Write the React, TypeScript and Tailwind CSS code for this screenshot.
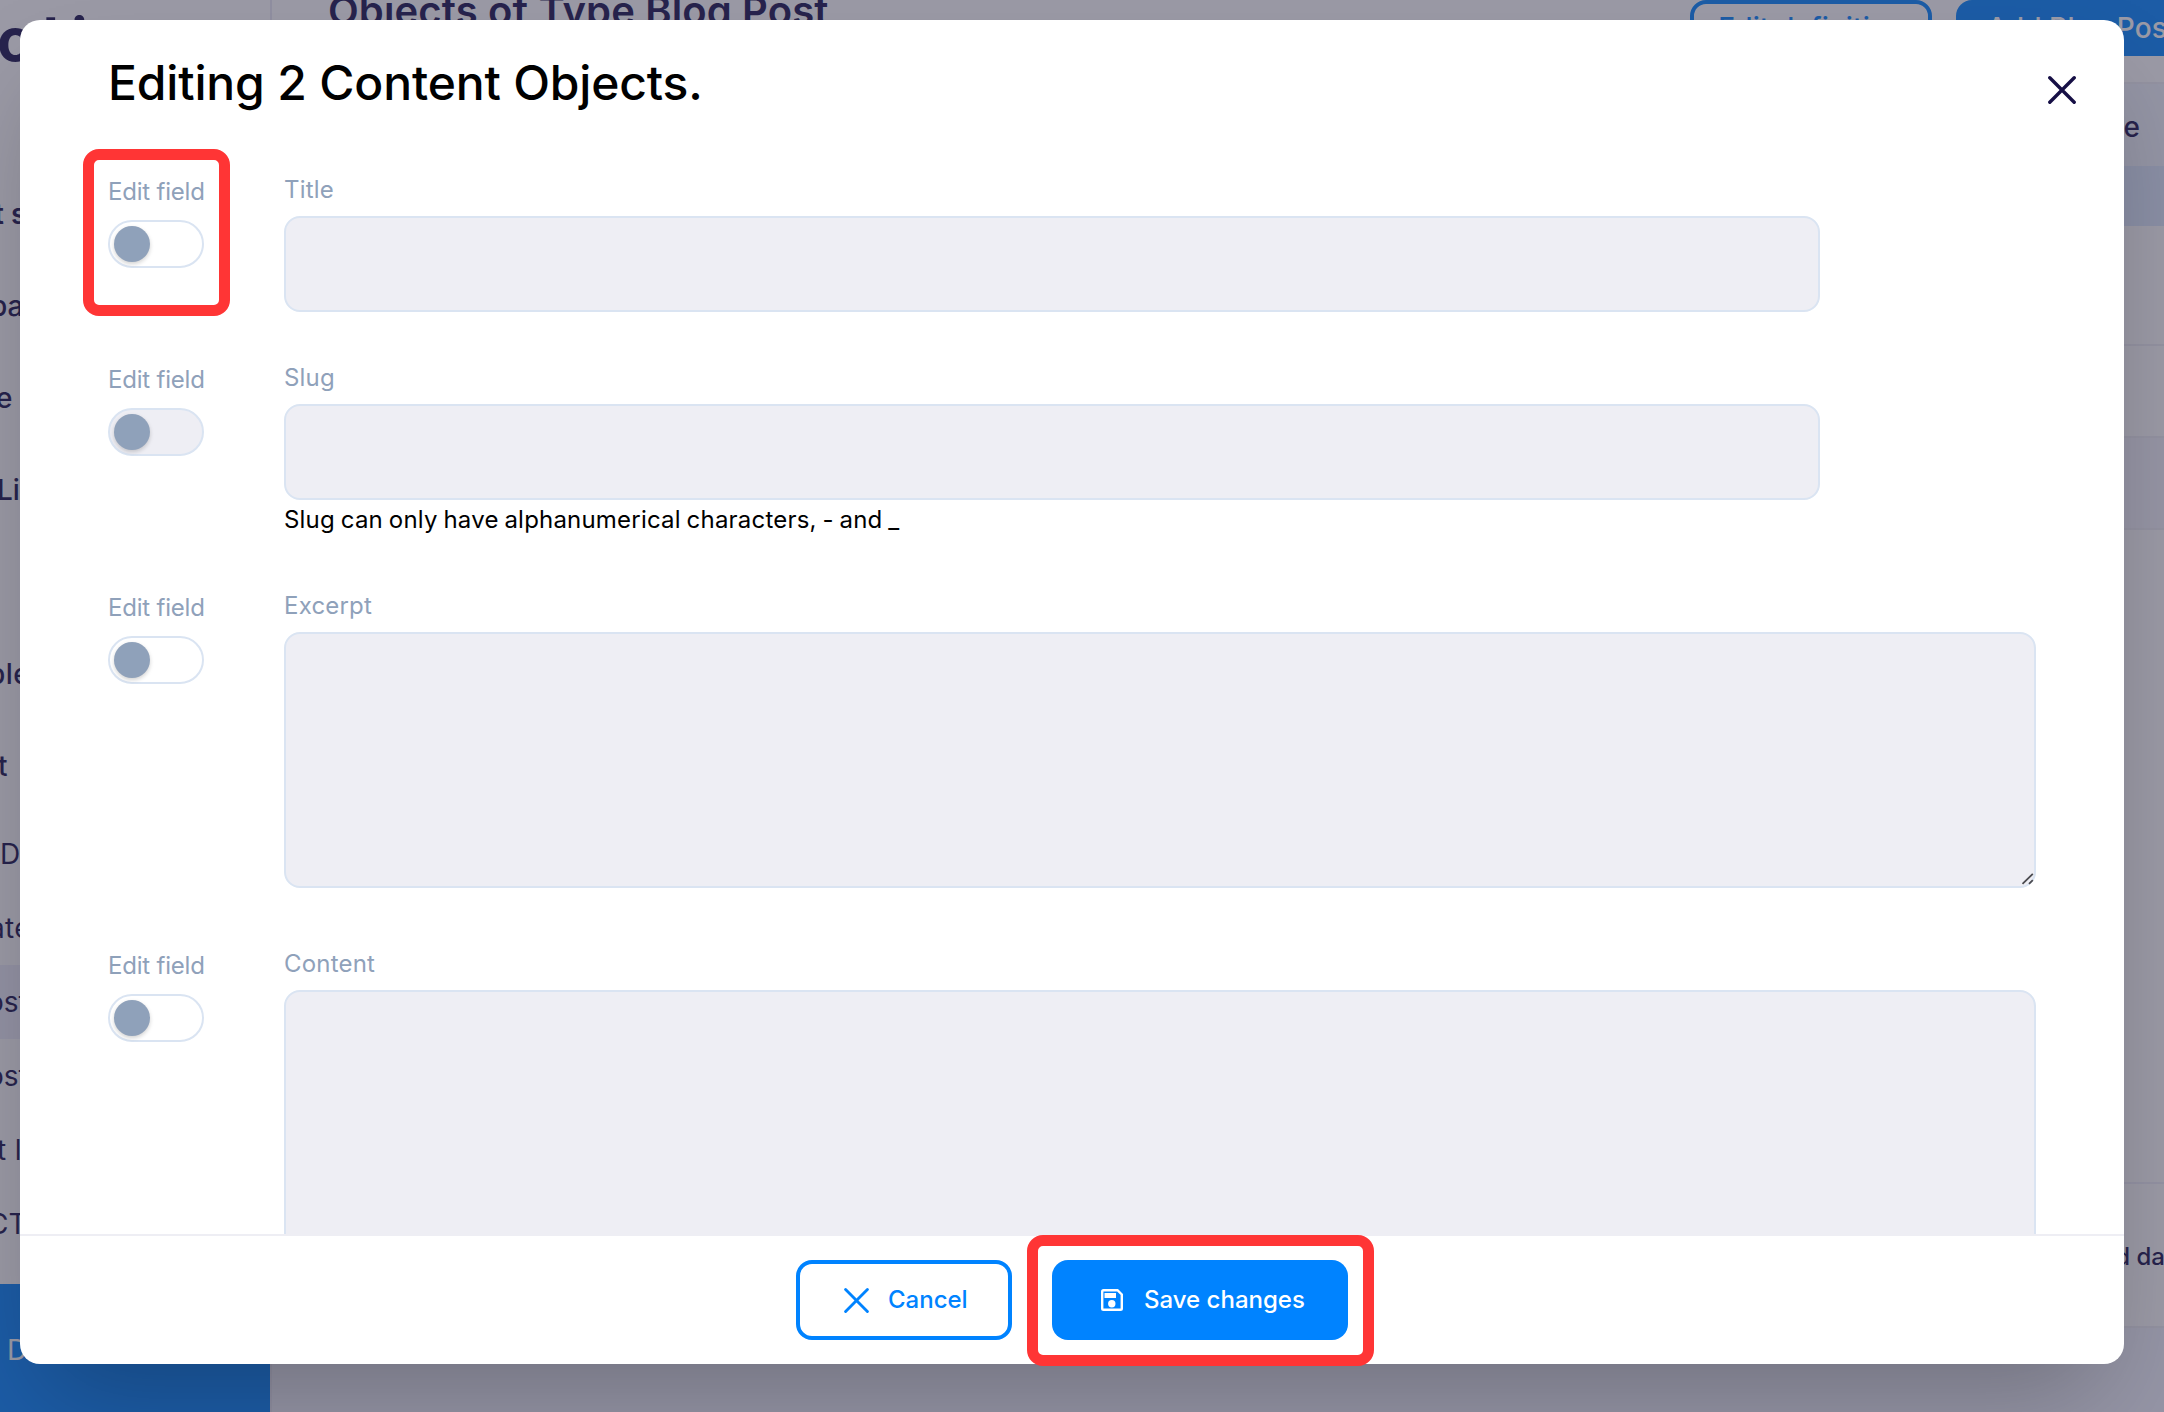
import React from "react";

const navGroups = [
  { label: "t s", cls: "font-semibold -ml-[6px]" },
  { label: "pa", cls: "font-medium -ml-[10px]" },
  { label: "e", cls: "font-medium -ml-[4px]" },
  { label: "Li", cls: "font-medium -ml-[3px]" },
  { label: "", cls: "" },
  { label: "ple", cls: "font-medium -ml-[12px] tracking-[0.5px]" },
  { label: "t", cls: "font-medium -ml-[2px]" },
];

const navTypes = [
  { label: "D", cls: "", active: false },
  { label: "ate", cls: "-ml-[11px] tracking-[0.3px]", active: false },
  { label: "ost", cls: "-ml-[13px]", active: true },
  { label: "ost", cls: "-ml-[13px]", active: false },
  { label: "t l", cls: "-ml-[3px] tracking-[0.4px]", active: false },
  { label: "CT", cls: "-ml-[12px]", active: false },
];

function Sidebar() {
  return (
    <aside className="flex h-full w-[272px] shrink-0 flex-col overflow-hidden border-r-2 border-[#e8e8f4] bg-white">
      <div className="flex h-[168px] items-start pt-[3px] text-[60px] leading-[72px] font-bold whitespace-nowrap">
        <span className="-ml-[3px]">c</span>
        <span className="-mt-[3px] ml-[9px]">t</span>
        <span className="ml-[8px]">i</span>
      </div>
      {navGroups.map((item, i) => (
        <div key={i} className="flex h-[92px] shrink-0 items-center whitespace-nowrap">
          <span className={item.cls}>{item.label}</span>
        </div>
      ))}
      <div className="mt-[5px] flex flex-col">
        {navTypes.map((item, i) => (
          <div
            key={i}
            className={`flex h-[74px] items-center whitespace-nowrap ${item.active ? "bg-[#eeeefa]" : ""}`}
          >
            <span className={item.cls}>{item.label}</span>
          </div>
        ))}
      </div>
      <div className="-mr-[2px] mt-auto flex h-[128px] items-center bg-[#0083ff] pt-1 text-white">
        <span className="ml-[7px]">D</span>
      </div>
    </aside>
  );
}

function Backdrop() {
  return (
    <div className="flex h-full w-full text-[28px] text-[#17114d]">
      <Sidebar />
      <main className="flex min-w-0 flex-1 flex-col bg-white">
        <header className="flex h-[84px] shrink-0 items-start border-b-2 border-[#eeeef5]">
          <h1 className="-mt-[17px] ml-[56px] flex-1 text-[40px] leading-[56px] font-semibold tracking-[0.13px] whitespace-nowrap">
            Objects of Type Blog Post
          </h1>
          <div className="-mr-[60px] flex gap-6 font-medium whitespace-nowrap">
            <div className="flex h-14 w-[242px] items-center justify-center rounded-2xl border-4 border-[#0083ff] tracking-[0.1px] text-[#0083ff]">
              Edit definition
            </div>
            <div className="flex h-14 w-[268px] items-center rounded-2xl bg-[#0083ff] pl-[31px] tracking-[0.1px] text-white">
              Add Blog Post
            </div>
          </div>
        </header>
        <div className="flex h-[82px] shrink-0 items-center justify-end bg-[#f1f5fd] pt-[3px] pr-6 font-medium">
          e
        </div>
        <div className="h-[60px] shrink-0 bg-[#dde9fd]" />
        <div className="h-[120px] shrink-0 border-b-2 border-[#eeeef5]" />
        <div className="h-[92px] shrink-0 border-b-2 border-[#eeeef5]" />
        <div className="h-[92px] shrink-0 border-b-2 border-[#eeeef5] bg-[#f5f5fc]" />
        <div className="h-[654px] shrink-0 border-b-2 border-[#eeeef9]" />
        <div className="flex h-[144px] shrink-0 items-center justify-end border-b-2 border-[#eeeef5] pt-[3px] text-2xl font-medium whitespace-nowrap">
          <span className="-mr-px">d da</span>
        </div>
        <div className="flex-1 bg-[#f3f5ff]" />
      </main>
    </div>
  );
}

function Toggle({ disabled = false }: { disabled?: boolean }) {
  return (
    <div
      className={`flex h-12 w-24 items-center rounded-full border-2 border-[#dae4f2] pl-1 ${disabled ? "bg-[#eeeef4]" : "bg-white"}`}
    >
      <div className="size-9 rounded-full bg-[#8fa1ba] shadow-[0_2px_4px_rgba(0,0,0,0.18)]" />
    </div>
  );
}

function ResizeHandle() {
  return (
    <svg
      viewBox="0 0 14 14"
      className="absolute -right-px bottom-0 size-[14px]"
      stroke="#4b4b50"
      strokeWidth="1.8"
      fill="none"
    >
      <path d="M1.5 11.8L11.8 1.8M8 11.8L11.8 8.2" />
    </svg>
  );
}

type FieldProps = {
  label: string;
  rowCls: string;
  boxCls: string;
  disabled?: boolean;
  help?: string;
  resizable?: boolean;
};

function Field({ label, rowCls, boxCls, disabled, help, resizable }: FieldProps) {
  return (
    <div className={`flex shrink-0 ${rowCls}`}>
      <div className="w-44 shrink-0">
        <div className="mt-[2px] mb-[11px] text-2xl leading-[35px] tracking-[-0.2px] whitespace-nowrap text-[#8fa1ba]">
          Edit field
        </div>
        <Toggle disabled={disabled} />
      </div>
      <div className="flex-1">
        <div className="mb-[9px] text-2xl leading-[35px] tracking-[0.2px] text-[#8fa1ba]">{label}</div>
        <div className={`relative rounded-2xl border-2 border-[#dae4f2] bg-[#eeeef4] ${boxCls}`}>
          {resizable && <ResizeHandle />}
        </div>
        {help && (
          <p className="mt-0.5 text-2xl leading-9 tracking-[0.2px] text-black [word-spacing:-1.1px]">{help}</p>
        )}
      </div>
    </div>
  );
}

function CrossIcon({ className, width }: { className: string; width: number }) {
  return (
    <svg
      viewBox="0 0 28 28"
      className={className}
      fill="none"
      stroke="currentColor"
      strokeWidth={width}
      strokeLinecap="round"
    >
      <path d="M1.8 1.8L26.2 26.2M26.2 1.8L1.8 26.2" />
    </svg>
  );
}

function SaveIcon() {
  return (
    <svg viewBox="0 0 22 22" className="size-[22px]" fill="none">
      <path
        d="M2.5 1.2H16.5L20.8 5.5V19.5Q20.8 20.8 19.5 20.8H2.5Q1.2 20.8 1.2 19.5V2.5Q1.2 1.2 2.5 1.2Z"
        stroke="white"
        strokeWidth="2.4"
      />
      <rect x="3.5" y="4" width="11.5" height="5" fill="white" />
      <circle cx="10.8" cy="14.8" r="3.7" fill="white" />
    </svg>
  );
}

function Dialog() {
  return (
    <div className="absolute top-5 left-5 flex h-[1344px] w-[2104px] flex-col rounded-[20px] bg-white shadow-[0_50px_100px_-24px_rgba(0,0,0,0.25)]">
      <div className="flex min-h-0 flex-1 flex-col overflow-hidden pl-[88px]">
        <div className="flex h-[152px] shrink-0 items-start justify-between pr-12">
          <h2 className="mt-[33px] text-[48px] leading-[60px] font-medium tracking-[-0.16px] text-black">
            Editing 2 Content Objects.
          </h2>
          <CrossIcon className="mt-14 size-7 text-[#160f45]" width={3.4} />
        </div>
        <Field label="Title" rowCls="h-[188px]" boxCls="h-24 w-[1536px]" />
        <Field
          label="Slug"
          rowCls="h-[228px]"
          boxCls="h-24 w-[1536px]"
          disabled
          help="Slug can only have alphanumerical characters, - and _"
        />
        <Field label="Excerpt" rowCls="h-[358px]" boxCls="h-64 w-[1752px]" resizable />
        <Field label="Content" rowCls="h-[358px]" boxCls="h-[300px] w-[1752px]" />
      </div>
      <footer className="flex h-[130px] shrink-0 justify-center gap-10 border-t-2 border-[#eeeef4] pt-6 text-2xl font-medium">
        <button className="flex h-20 w-[216px] items-center rounded-2xl border-4 border-[#0083ff] pl-[43.5px] text-[#0083ff]">
          <CrossIcon className="size-[25px]" width={3.2} />
          <span className="ml-[19.5px]">Cancel</span>
        </button>
        <button className="flex h-20 w-[296px] items-center rounded-2xl bg-[#0083ff] pl-[49px] text-white">
          <SaveIcon />
          <span className="ml-[21px]">Save changes</span>
        </button>
      </footer>
    </div>
  );
}

export default function App() {
  return (
    <div className="relative h-[1412px] w-[2164px] overflow-hidden bg-white font-['Inter',sans-serif]">
      <Backdrop />
      <div className="absolute inset-0 bg-[#37354d]/50" />
      <Dialog />
      <div className="absolute top-[149px] left-[83px] h-[167px] w-[147px] rounded-2xl border-[11px] border-[#ff3535]" />
      <div className="absolute top-[1235px] left-[1027px] h-[131px] w-[347px] rounded-2xl border-[11px] border-[#ff3535]" />
    </div>
  );
}
